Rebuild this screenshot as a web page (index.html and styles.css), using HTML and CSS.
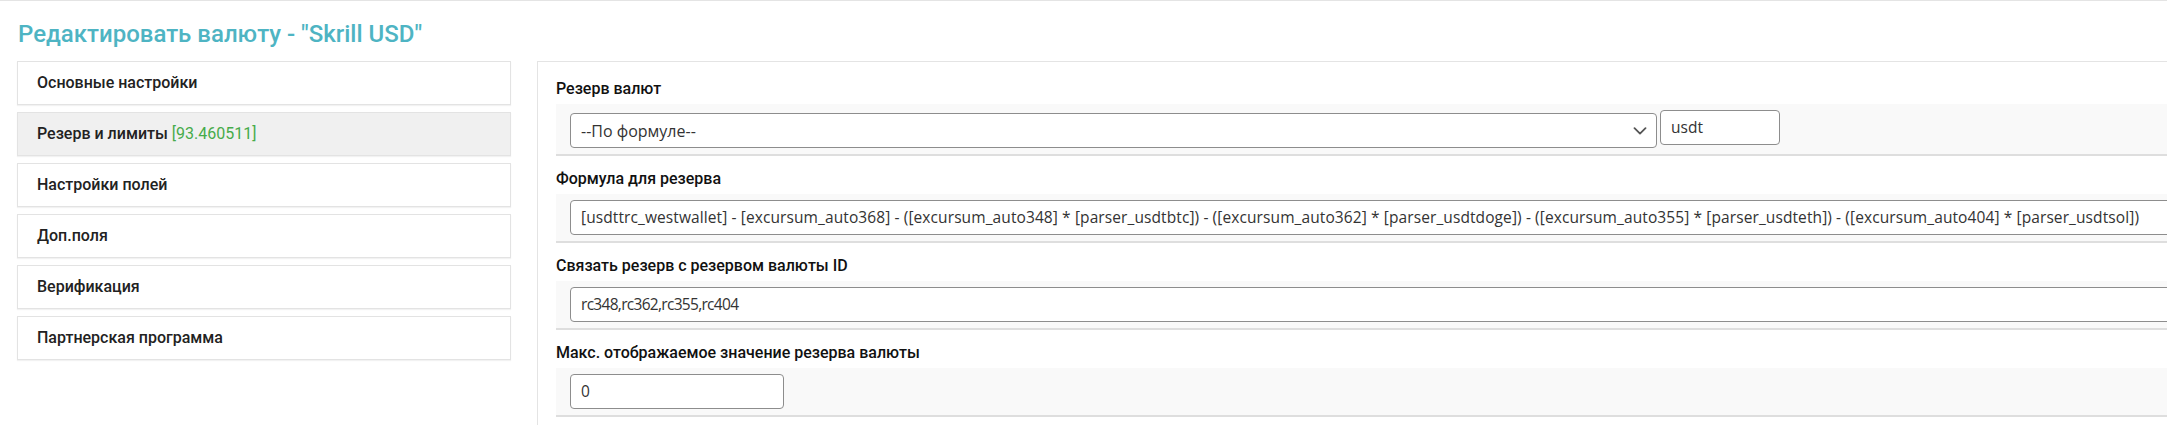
FILE: index.html
```html
<!DOCTYPE html>
<html lang="ru">
<head>
<meta charset="utf-8">
<title>Редактировать валюту</title>
<link rel="stylesheet" href="styles.css">
</head>
<body>
<div class="page">
  <h1 class="title">Редактировать валюту - "Skrill USD"</h1>
  <div class="layout">
    <nav class="side">
      <div class="side-item">Основные настройки</div>
      <div class="side-item active">Резерв и лимиты <span class="num">[93.460511]</span></div>
      <div class="side-item">Настройки полей</div>
      <div class="side-item">Доп.поля</div>
      <div class="side-item">Верификация</div>
      <div class="side-item">Партнерская программа</div>
    </nav>
    <section class="panel">
      <div class="field">
        <div class="label">Резерв валют</div>
        <div class="row row-select">
          <div class="select">
            <span>--По формуле--</span>
            <svg class="chev" width="14" height="8" viewBox="0 0 14 8"><path d="M1.5 1.2 L7 6.6 L12.5 1.2" fill="none" stroke="#555" stroke-width="1.8" stroke-linecap="round" stroke-linejoin="round"/></svg>
          </div>
          <div class="inp inp-code">usdt</div>
        </div>
      </div>
      <div class="field">
        <div class="label">Формула для резерва</div>
        <div class="row">
          <div class="inp inp-full inp-formula">[usdttrc_westwallet] - [excursum_auto368] - ([excursum_auto348] * [parser_usdtbtc]) - ([excursum_auto362] * [parser_usdtdoge]) - ([excursum_auto355] * [parser_usdteth]) - ([excursum_auto404] * [parser_usdtsol])</div>
        </div>
      </div>
      <div class="field">
        <div class="label">Связать резерв с резервом валюты ID</div>
        <div class="row">
          <div class="inp inp-full inp-ids">rc348,rc362,rc355,rc404</div>
        </div>
      </div>
      <div class="field">
        <div class="label">Макс. отображаемое значение резерва валюты</div>
        <div class="row">
          <div class="inp inp-small">0</div>
        </div>
      </div>
    </section>
  </div>
</div>
</body>
</html>
```

FILE: styles.css
```css
html, body {
  margin: 0;
  padding: 0;
  background: #ffffff;
  overflow: hidden;
}

.page {
  border-top: 1px solid #e4e4e4;
  padding-left: 17px;
  font-family: Roboto, "Liberation Sans", sans-serif;
  color: #222;
}

.title {
  margin: 19px 0 13px 1px;
  font-size: 24px;
  line-height: 28px;
  font-weight: 500;
  color: #4eb4c3;
}

.layout {
  display: flex;
  align-items: flex-start;
}

.side {
  flex: none;
  width: 494px;
  display: flex;
  flex-direction: column;
  gap: 7px;
}

.side-item {
  height: 42px;
  line-height: 42px;
  border: 1px solid #e3e3e3;
  box-shadow: 0 1px 1px rgba(0, 0, 0, 0.05);
  padding-left: 19px;
  font-size: 16px;
  font-weight: 500;
  color: #222;
  background: #fff;
}

.side-item.active {
  background: #f0f0f0;
}

.num {
  color: #46ab4a;
  font-weight: 400;
}

.panel {
  flex: none;
  width: 1800px;
  margin-left: 26px;
  border: 1px solid #e4e4e4;
  padding: 4px 0 30px 18px;
  box-sizing: border-box;
}

.label {
  padding: 13px 0 5px;
  line-height: 20px;
  font-size: 16px;
  font-weight: 500;
  color: #111;
}

.row {
  display: flex;
  align-items: flex-start;
  background: #f9f9f9;
  border-bottom: 2px solid #dedede;
  padding: 6px 14px;
}

.select {
  box-sizing: border-box;
  width: 1087px;
  height: 35px;
  margin-top: 3px;
  border: 1px solid #8d8d8d;
  border-radius: 4px;
  background: #fff;
  display: flex;
  align-items: center;
  justify-content: space-between;
  padding: 0 9px 0 10px;
  font-family: "Open Sans", "Noto Sans", sans-serif;
  font-size: 16px;
  color: #333;
}

.chev {
  display: block;
}

.inp {
  box-sizing: border-box;
  height: 35px;
  border: 1px solid #8d8d8d;
  border-radius: 4px;
  background: #fff;
  padding: 0 10px;
  line-height: 33px;
  font-family: "Open Sans", "Noto Sans", sans-serif;
  font-size: 15.5px;
  color: #333;
  white-space: nowrap;
  overflow: hidden;
}

.inp-code {
  width: 120px;
  margin-left: 3px;
}

.inp-full {
  flex: 1;
}

.inp-formula {
  letter-spacing: 0.1px;
}

.inp-ids {
  letter-spacing: -0.7px;
}

.inp-small {
  width: 214px;
}
```
